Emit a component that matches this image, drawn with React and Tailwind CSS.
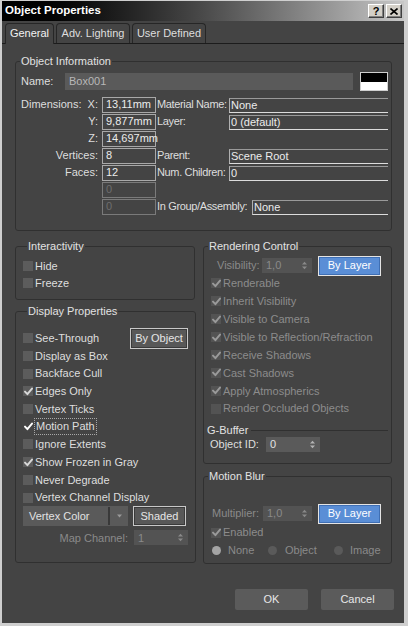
import React from 'react';

function CheckMark({ color }) {
  return (
    <svg width="9" height="9" viewBox="0 0 9 9">
      <path d="M1 4.6 L3.4 7.2 L8 1.6" stroke={color} strokeWidth="1.9" fill="none" strokeLinecap="round" strokeLinejoin="round" />
    </svg>
  );
}

function Check({ label, checked, disabled, focus, rowClass = 'h-[17.7px]' }) {
  const boxBg = focus ? 'bg-[#454545]' : disabled ? 'bg-[#535353]' : 'bg-[#5c5c5c]';
  const mark = focus ? '#ffffff' : disabled ? '#9a9a9a' : '#d8d8d8';
  return (
    <div className={`flex items-center ${rowClass}`}>
      <span className={`w-[10px] h-[10px] flex items-center justify-center ${boxBg}`}>
        {checked && <CheckMark color={mark} />}
      </span>
      <span
        className={`ml-[2px] whitespace-nowrap ${disabled ? 'text-[#8c8c8c]' : 'text-[#dedede]'} ${focus ? 'outline-1 outline-dotted outline-[#a8a8a8] px-[1px] leading-[15px]' : ''}`}
      >
        {label}
      </span>
    </div>
  );
}

function Arrows({ color }) {
  return (
    <svg width="5" height="9" viewBox="0 0 5 9">
      <path d="M0 3.5 L2.5 0.8 L5 3.5Z" fill={color} />
      <path d="M0 5.5 L2.5 8.2 L5 5.5Z" fill={color} />
    </svg>
  );
}

function Spinner({ value, width, dim }) {
  return (
    <div className={`flex items-center h-[15px] ${width} ${dim ? 'bg-[#535353] text-[#8a8a8a]' : 'bg-[#5a5a5a] text-[#e2e2e2]'} pl-[4px] pr-[5px]`}>
      <span className="flex-1">{value}</span>
      <Arrows color={dim ? '#8a8a8a' : '#b4b4b4'} />
    </div>
  );
}

function Group({ title, className = '', children }) {
  return (
    <fieldset className={`border border-[#303030] rounded-[3px] ${className}`}>
      <legend className="ml-[4px] px-[1px] leading-[13px] text-[#e2e2e2] whitespace-nowrap">{title}</legend>
      {children}
    </fieldset>
  );
}

function GreyButton({ label, className }) {
  return (
    <div className={`flex items-center justify-center border border-[#c8c8c8] bg-[#585858] shadow-[inset_0_0_0_1px_#3a3a3a] text-[#e6e6e6] ${className}`}>
      {label}
    </div>
  );
}

function BlueButton() {
  return (
    <div className="flex items-center justify-center w-[63px] h-[20px] border border-[#e4e4e4] bg-[#5a8ed6] shadow-[inset_0_0_0_1px_#3f6fb4] text-white">
      By Layer
    </div>
  );
}

function InfoRow({ left, value, dim, rightLabel, rightValue, rightLabelWidth = 'w-[73px]' }) {
  return (
    <div className="flex items-center h-[17px]">
      <div className="w-[86px] h-full flex items-center pl-[5px] pr-[4px] whitespace-nowrap">{left}</div>
      <div className={`w-[54px] h-[16px] border flex items-center pl-[3px] ${dim ? 'border-[#7a7a7a] text-[#6e6e6e]' : 'border-[#a8a8a8] text-[#ececec]'}`}>
        {value}
      </div>
      {rightLabel && (
        <>
          <div className={`${rightLabelWidth} pl-[1px] whitespace-nowrap tracking-[-0.35px]`}>{rightLabel}</div>
          <div className="flex-1 h-[15px] self-end border-l border-t border-b border-t-[#9a9a9a] border-l-[#b0b0b0] border-b-[#dcdcdc] flex items-center pl-[1px] text-[#ececec]">
            {rightValue}
          </div>
        </>
      )}
    </div>
  );
}

export default function App() {
  return (
    <div className="w-[408px] h-[626px] bg-[#cfcfcf] pl-[2px] pr-[4px] pt-[1px] pb-[3px] flex flex-col font-['Liberation_Sans',Arial,sans-serif] text-[11px] text-[#dedede] select-none">
      {/* title bar */}
      <div className="h-[20px] flex items-center bg-linear-to-r from-black via-[#4a4a4a] to-[#c8c8c8] pl-[3px] pr-[2px]">
        <span className="flex-1 font-bold text-white text-[11.5px]">Object Properties</span>
        <div className="flex gap-[2px]">
          <div className="w-[16px] h-[14px] bg-[#d4d0c8] border-t border-l border-white border-r border-b border-r-[#404040] border-b-[#404040] shadow-[inset_-1px_-1px_#808080] flex items-center justify-center text-black font-bold text-[11px] leading-none">
            ?
          </div>
          <div className="w-[16px] h-[14px] bg-[#d4d0c8] border-t border-l border-white border-r border-b border-r-[#404040] border-b-[#404040] shadow-[inset_-1px_-1px_#808080] flex items-center justify-center">
            <svg width="8" height="7" viewBox="0 0 8 7">
              <path d="M0.5 0.5 L7.5 6.5 M7.5 0.5 L0.5 6.5" stroke="black" strokeWidth="1.6" />
            </svg>
          </div>
        </div>
      </div>

      {/* body */}
      <div className="flex-1 bg-[#444444] flex flex-col">
        {/* tabs */}
        <div className="h-[23px] pt-[2px] pl-[3px] pr-[2px] flex items-end gap-[2px] border-b border-[#1c1c1c]">
          <div className="w-[49px] h-[21px] -mb-px bg-[#444444] border border-b-0 border-[#262626] rounded-t-[4px] flex items-center justify-center text-[#f2f2f2] pb-[1px]">
            General
          </div>
          <div className="w-[74px] h-[20px] border border-b-0 border-[#262626] rounded-t-[4px] flex items-center justify-center">
            Adv. Lighting
          </div>
          <div className="w-[74px] h-[20px] border border-b-0 border-[#262626] rounded-t-[4px] flex items-center justify-center">
            User Defined
          </div>
        </div>

        {/* Object Information */}
        <Group title="Object Information" className="ml-[13px] mt-[10.5px] w-[377px] pt-[4.5px] pb-[15px] pr-[3px]">
          <div className="flex items-center h-[19px]">
            <div className="w-[49px] pl-[5px]">Name:</div>
            <div className="w-[288px] h-[17px] bg-[#5a5a5a] flex items-center pl-[4px] text-[#b8b8b8]">Box001</div>
            <div className="ml-[7px] w-[28px] h-[19px] border border-[#cfcfcf] flex flex-col">
              <div className="flex-1 bg-black"></div>
              <div className="flex-1 bg-white"></div>
            </div>
          </div>
          <div className="mt-[5px] flex flex-col">
            <InfoRow
              left={<div className="flex-1 flex justify-between"><span>Dimensions:</span><span>X:</span></div>}
              value="13,11mm"
              rightLabel="Material Name:"
              rightValue="None"
            />
            <InfoRow left={<span className="flex-1 text-right">Y:</span>} value="9,877mm" rightLabel="Layer:" rightValue="0 (default)" />
            <InfoRow left={<span className="flex-1 text-right">Z:</span>} value="14,697mm" />
            <InfoRow left={<span className="flex-1 text-right">Vertices:</span>} value="8" rightLabel="Parent:" rightValue="Scene Root" />
            <InfoRow left={<span className="flex-1 text-right">Faces:</span>} value="12" rightLabel="Num. Children:" rightValue="0" />
            <InfoRow left={null} value="0" dim />
            <InfoRow left={null} value="0" dim rightLabel="In Group/Assembly:" rightValue="None" rightLabelWidth="w-[96px]" />
          </div>
        </Group>

        {/* two columns */}
        <div className="ml-[13px] mt-[8.5px] flex gap-[8px]">
          <div className="w-[180px] flex flex-col">
            <Group title="Interactivity" className="pt-[5px] pb-[7.5px] pl-[7px]">
              <Check label="Hide" rowClass="h-[17px]" />
              <Check label="Freeze" rowClass="h-[17px]" />
            </Group>

            <Group title="Display Properties" className="mt-[5px] pt-[11.5px] pb-[17px] pl-[7px] pr-[7px]">
              <div className="flex items-center justify-between h-[17.7px]">
                <Check label="See-Through" />
                <GreyButton label="By Object" className="w-[58px] h-[21px]" />
              </div>
              <Check label="Display as Box" />
              <Check label="Backface Cull" />
              <Check label="Edges Only" checked />
              <Check label="Vertex Ticks" />
              <Check label="Motion Path" checked focus />
              <Check label="Ignore Extents" />
              <Check label="Show Frozen in Gray" checked />
              <Check label="Never Degrade" />
              <Check label="Vertex Channel Display" />
              <div className="flex items-center h-[20px]">
                <div className="w-[105px] h-[20px] bg-[#5a5a5a] flex items-center text-[#e2e2e2]">
                  <span className="flex-1 pl-[6px]">Vertex Color</span>
                  <div className="w-[2px] h-[18px] bg-[#393939]"></div>
                  <div className="w-[18px] flex items-center justify-center">
                    <svg width="5" height="4" viewBox="0 0 5 4">
                      <path d="M0 0.5 L5 0.5 L2.5 3.5Z" fill="#9a9a9a" />
                    </svg>
                  </div>
                </div>
                <GreyButton label="Shaded" className="ml-[5px] w-[53px] h-[20px]" />
              </div>
              <div className="flex items-center mt-[4px] h-[15px]">
                <span className="w-[105px] text-right text-[#8a8a8a]">Map Channel:</span>
                <div className="ml-[6px]">
                  <Spinner value="1" width="w-[54px]" dim />
                </div>
              </div>
            </Group>
          </div>

          <div className="w-[189px] flex flex-col">
            <Group title="Rendering Control" className="pt-[4px] pb-[10px]">
              <div className="flex items-center h-[18px]">
                <span className="w-[58px] pl-[13px] text-[#8a8a8a]">Visibility:</span>
                <Spinner value="1,0" width="w-[50px]" dim />
                <div className="ml-[6px]">
                  <BlueButton />
                </div>
              </div>
              <div className="pl-[7px]">
                <Check label="Renderable" checked disabled rowClass="h-[17.9px]" />
                <Check label="Inherit Visibility" checked disabled rowClass="h-[17.9px]" />
                <Check label="Visible to Camera" checked disabled rowClass="h-[17.9px]" />
                <Check label="Visible to Reflection/Refraction" checked disabled rowClass="h-[17.9px]" />
                <Check label="Receive Shadows" checked disabled rowClass="h-[17.9px]" />
                <Check label="Cast Shadows" checked disabled rowClass="h-[17.9px]" />
                <Check label="Apply Atmospherics" checked disabled rowClass="h-[17.9px]" />
                <Check label="Render Occluded Objects" disabled rowClass="h-[17.9px]" />
              </div>
              <div className="mt-[6px] h-[13px] flex items-center pl-[3px] pr-[3px]">
                <span className="text-[#e2e2e2]">G-Buffer</span>
                <div className="flex-1 ml-[3px] border-t border-[#303030]"></div>
              </div>
              <div className="flex items-center h-[16px]">
                <span className="w-[62px] pl-[6px]">Object ID:</span>
                <Spinner value="0" width="w-[54px]" />
              </div>
            </Group>

            <Group title="Motion Blur" className="mt-[6.5px] pt-[20.5px] pb-[3px]">
              <div className="flex items-center h-[20px]">
                <span className="w-[59px] pl-[8px] text-[#8a8a8a]">Multiplier:</span>
                <Spinner value="1,0" width="w-[49px]" dim />
                <div className="ml-[6px]">
                  <BlueButton />
                </div>
              </div>
              <div className="pl-[7px]">
                <Check label="Enabled" checked disabled rowClass="h-[17.9px]" />
              </div>
              <div className="flex items-center h-[18px] pl-[8px] text-[#8a8a8a]">
                <div className="w-[56px] flex items-center">
                  <span className="w-[9px] h-[9px] rounded-full bg-[#a4a4a4]"></span>
                  <span className="ml-[7px]">None</span>
                </div>
                <div className="w-[66px] flex items-center">
                  <span className="w-[9px] h-[9px] rounded-full bg-[#5a5a5a]"></span>
                  <span className="ml-[8px]">Object</span>
                </div>
                <div className="flex items-center">
                  <span className="w-[9px] h-[9px] rounded-full bg-[#5a5a5a]"></span>
                  <span className="ml-[7px]">Image</span>
                </div>
              </div>
            </Group>
          </div>
        </div>

        {/* bottom buttons */}
        <div className="mt-[25px] flex justify-end gap-[13px] pr-[10px]">
          <div className="w-[73px] h-[21px] rounded-[2px] bg-[#5b5b5b] flex items-center justify-center text-[#e8e8e8]">OK</div>
          <div className="w-[73px] h-[21px] rounded-[2px] bg-[#5b5b5b] flex items-center justify-center text-[#e8e8e8]">Cancel</div>
        </div>
      </div>
    </div>
  );
}
